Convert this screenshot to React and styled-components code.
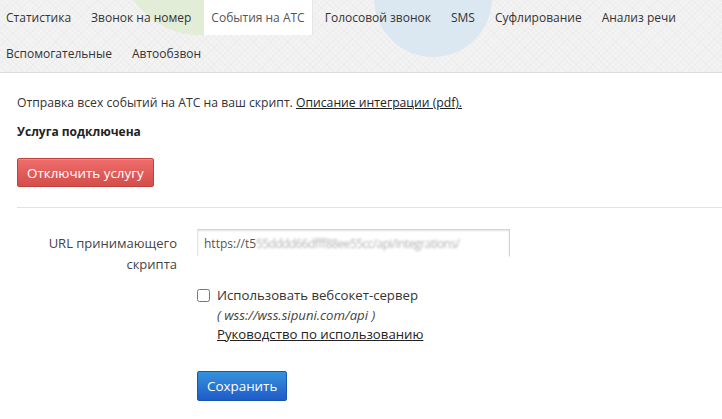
import styled, { createGlobalStyle } from "styled-components";

const GlobalStyle = createGlobalStyle`
  body {
    margin: 0;
    background: #fff;
    font-family: "Open Sans", "Noto Sans", sans-serif;
    font-size: 12px;
    color: #333;
  }
`;

const topTabs = ["Статистика", "Звонок на номер", "События на АТС", "Голосовой звонок", "SMS", "Суфлирование", "Анализ речи"];
const bottomTabs = ["Вспомогательные", "Автообзвон"];

function App() {
  return (
    <>
      <GlobalStyle />
      <Page>
        <Nav>
          <Blob color="#e2edd8" size="160px" left="120px" top="-125px" />
          <Blob color="#dbe8f2" size="118px" left="374px" top="-61px" />
          <TabRow>
            {topTabs.map(t => (
              <Tab key={t} active={t === "События на АТС"}>{t}</Tab>
            ))}
          </TabRow>
          <TabRow>
            {bottomTabs.map(t => (
              <Tab key={t}>{t}</Tab>
            ))}
          </TabRow>
        </Nav>

        <Content>
          <Intro>
            Отправка всех событий на АТС на ваш скрипт. <Link>Описание интеграции (pdf).</Link>
          </Intro>
          <Status>Услуга подключена</Status>
          <RedButton>Отключить услугу</RedButton>
          <Divider />

          <FormRow gap="11px">
            <Label>URL принимающего скрипта</Label>
            <Field>
              <UrlBox>
                https://t5<Blurred>55dddd66dfff88ee55cc/api/integrations/</Blurred>
              </UrlBox>
            </Field>
          </FormRow>

          <FormRow gap="26px">
            <Label />
            <Field>
              <CheckLine>
                <Box type="checkbox" />
                <div>
                  <div>Использовать вебсокет-сервер</div>
                  <Hint>( wss://wss.sipuni.com/api )</Hint>
                  <Link>Руководство по использованию</Link>
                </div>
              </CheckLine>
            </Field>
          </FormRow>

          <FormRow>
            <Label />
            <Field>
              <BlueButton>Сохранить</BlueButton>
            </Field>
          </FormRow>
        </Content>
      </Page>
    </>
  );
}

const Page = styled.div`
  width: 722px;
  height: 419px;
  overflow: hidden;
`;

const Nav = styled.div`
  position: relative;
  overflow: hidden;
  height: 72px;
  border-bottom: 1px solid #dcdcdc;
  background-color: #f3f3f3;
  background-image:
    repeating-linear-gradient(45deg, rgba(0,0,0,0.018) 0 1px, transparent 1px 4px),
    repeating-linear-gradient(-45deg, rgba(0,0,0,0.018) 0 1px, transparent 1px 4px);
`;

const Blob = styled.div`
  position: absolute;
  left: ${p => p.left};
  top: ${p => p.top};
  width: ${p => p.size};
  height: ${p => p.size};
  border-radius: 50%;
  background: ${p => p.color};
`;

const TabRow = styled.div`
  position: relative;
  display: flex;
  height: 36px;
  margin-left: -2px;
`;

const Tab = styled.div`
  display: flex;
  align-items: center;
  padding: 0 7px;
  margin-right: 4px;
  height: 35px;
  font-size: 12px;
  color: ${p => (p.active ? "#555" : "#333")};
  background: ${p => (p.active ? "#fff" : "transparent")};
  border-left: 1px solid ${p => (p.active ? "#e6e6e6" : "transparent")};
  border-right: 1px solid ${p => (p.active ? "#e6e6e6" : "transparent")};
`;

const Content = styled.div`
  padding: 21px 0 0 17px;
`;

const Intro = styled.p`
  margin: 0 0 11px;
  line-height: 18px;
  font-size: 12.2px;
`;

const Link = styled.span`
  color: #222;
  text-decoration: underline;
`;

const Status = styled.p`
  margin: 0 0 17px;
  font-weight: bold;
  color: #222;
  line-height: 18px;
`;

const RedButton = styled.button`
  font-family: inherit;
  font-size: 13.4px;
  color: #fff;
  height: 29px;
  padding: 0 9px;
  border: 1px solid #c0403d;
  border-radius: 2px;
  background: linear-gradient(#ee6d6a, #d44e4b);
  box-shadow: inset 0 1px 0 rgba(255,255,255,0.2);
`;

const Divider = styled.hr`
  margin: 20px 0 21px;
  border: 0;
  border-top: 1px solid #e2e2e2;
`;

const FormRow = styled.div`
  display: flex;
  gap: 20px;
  margin-bottom: ${p => p.gap || "0"};
`;

const Label = styled.div`
  width: 160px;
  text-align: right;
  font-size: 13px;
  line-height: 21px;
  color: #444;
  padding-top: 4px;
`;

const Field = styled.div`
  flex: 1;
`;

const UrlBox = styled.div`
  width: 313px;
  height: 28px;
  box-sizing: border-box;
  padding: 0 6px;
  display: flex;
  align-items: center;
  white-space: nowrap;
  overflow: hidden;
  font-size: 12px;
  color: #555;
  border: 1px solid #d4d4d4;
  border-bottom-color: #fff;
  border-left-color: #e4e4e4;
  box-shadow: inset 0 1px 2px rgba(0,0,0,0.12);
  background: #fff;
`;

const Blurred = styled.span`
  color: #b4b4b4;
  filter: blur(1.1px);
  letter-spacing: -0.6px;
`;

const CheckLine = styled.label`
  display: flex;
  gap: 7px;
  font-size: 13.2px;
  line-height: 19.5px;
  color: #333;
`;

const Box = styled.input`
  width: 13px;
  height: 13px;
  margin: 3px 0 0;
`;

const Hint = styled.div`
  font-style: italic;
  color: #444;
`;

const BlueButton = styled.button`
  font-family: inherit;
  font-size: 13.4px;
  color: #fff;
  height: 30px;
  padding: 0 9px;
  border: 1px solid #1a55b0;
  border-radius: 2px;
  background: linear-gradient(#3592dc, #1f5bc9);
`;

export default App;
